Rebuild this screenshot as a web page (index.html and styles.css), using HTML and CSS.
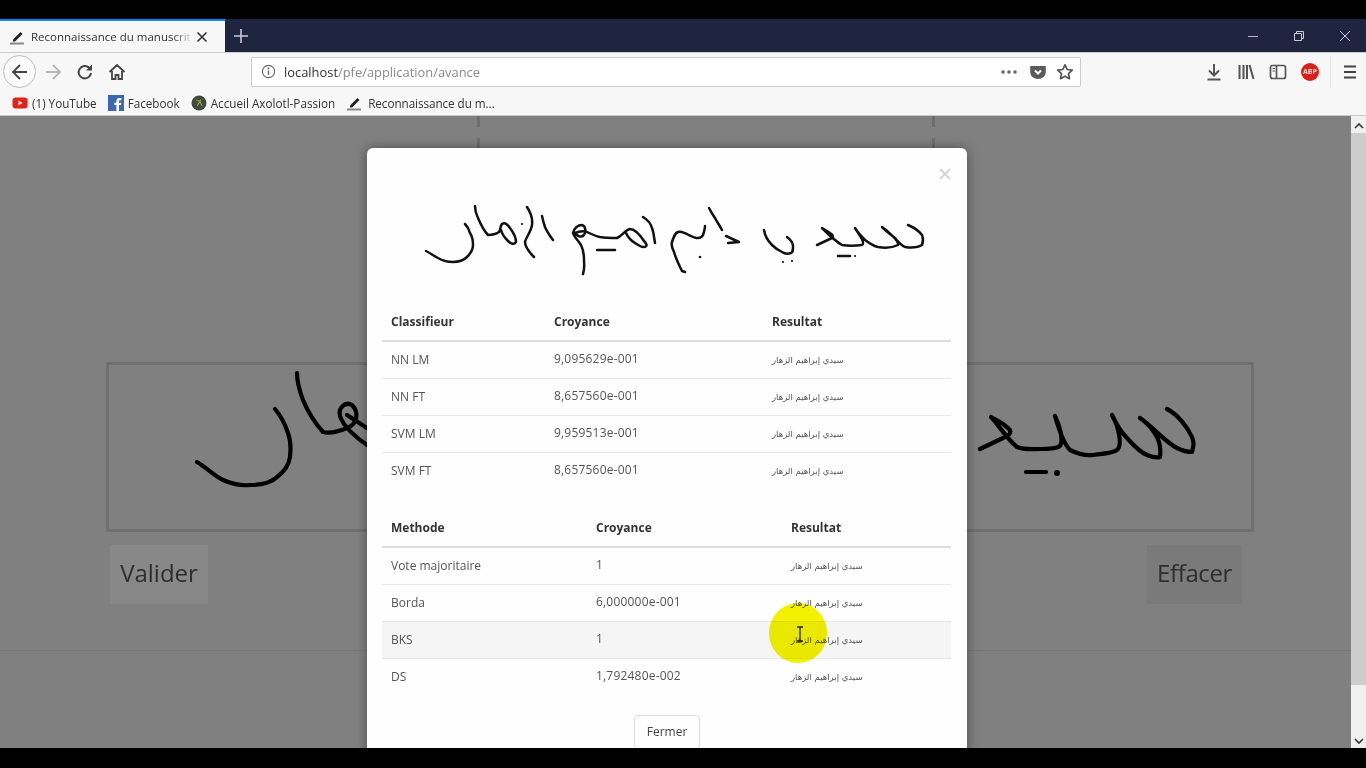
FILE: index.html
```html
<!DOCTYPE html>
<html lang="fr">
<head>
    <meta charset="UTF-8">
    <title>Reconnaissance du manuscrit</title>
    <link rel="stylesheet" href="styles.css">
</head>
<body>
    <div class="band"></div>

    <!-- Tabs -->
    <div class="tabbar">
        <div class="tab">
            <svg class="ico16" viewBox="0 0 16 16"><path d="M4 10.500 11.500 3l2 2L6 12.500H4z" fill="#222"/><path d="M1 14.500h14" stroke="#888" stroke-width="2"/></svg>
            <span class="tab-title">Reconnaissance du manuscrit a</span>
            <svg class="tab-close" viewBox="0 0 12 12"><path d="M1.500 1.500l9 9M10.500 1.500l-9 9" stroke="#333" stroke-width="1.600"/></svg>
        </div>
        <svg class="tab-new" viewBox="0 0 14 14"><path d="M7 0v14M0 7h14" stroke="#c4c8d8" stroke-width="1.600"/></svg>
        <div class="win-btns">
            <svg viewBox="0 0 12 12"><path d="M1 6.500h10" stroke="#b5b9c8" stroke-width="1"/></svg>
            <svg viewBox="0 0 12 12"><path d="M1.500 3.500h7v7h-7zM3.500 3.500v-2h7v7h-2" fill="none" stroke="#c8ccd8" stroke-width="1"/></svg>
            <svg viewBox="0 0 12 12"><path d="M1 1l10 10M11 1L1 11" stroke="#c8ccd8" stroke-width="1"/></svg>
        </div>
    </div>

    <!-- Toolbar -->
    <div class="toolbar">
        <div class="nav-btn back">
            <svg class="ico18" viewBox="0 0 18 18"><path d="M16 9H2M9 2 2 9l7 7" fill="none" stroke="#444" stroke-width="1.800"/></svg>
        </div>
        <svg class="ico18 forward" viewBox="0 0 18 18"><path d="M2 9h14M9 2l7 7-7 7" fill="none" stroke="#b5b5b5" stroke-width="1.800"/></svg>
        <svg class="ico18 reload" viewBox="0 0 18 18"><path d="M15 10a6.200 6.200 0 1 1-1.800-5.200L15 6.500" fill="none" stroke="#444" stroke-width="2"/><path d="M16 1.500v6h-6z" fill="#444"/></svg>
        <svg class="ico18 home" viewBox="0 0 18 18"><path d="M1.500 9 9 2l7.500 7M4 8v8h3.500v-4h3v4H14V8" fill="none" stroke="#444" stroke-width="1.800"/></svg>
        <div class="urlbar">
            <svg class="info" viewBox="0 0 16 16"><circle cx="8" cy="8" r="6.500" fill="none" stroke="#666" stroke-width="1.200"/><path d="M8 7v4.500" stroke="#666" stroke-width="1.500"/><circle cx="8" cy="4.800" r="1" fill="#666"/></svg>
            <span class="url"><span class="host">localhost</span>/pfe/application/avance</span>
            <svg class="dots" viewBox="0 0 16 4"><circle cx="2" cy="2" r="1.800" fill="#666"/><circle cx="8" cy="2" r="1.800" fill="#666"/><circle cx="14" cy="2" r="1.800" fill="#666"/></svg>
            <svg class="pocket" viewBox="0 0 16 16"><path d="M1 2h14a.800.800 0 0 1 .800.800V8a7.800 7 0 0 1-15.600 0V2.800A.800.800 0 0 1 1 2z" fill="#5a5a5a"/><path d="M5 6.500l3 3 3-3" fill="none" stroke="#fff" stroke-width="2"/></svg>
            <svg class="star" viewBox="0 0 18 18"><path d="M9 1.800l2.200 4.700 5.100.6-3.800 3.500 1 5.100L9 13.200l-4.500 2.500 1-5.100L1.700 7.100l5.100-.6z" fill="none" stroke="#555" stroke-width="1.700" stroke-linejoin="round"/></svg>
        </div>
        <div class="tools">
            <svg class="ico18" viewBox="0 0 18 18"><path d="M9 1v11M4 7.500 9 12.500l5-5M2.500 16.500h13" fill="none" stroke="#555" stroke-width="2"/></svg>
            <svg class="ico18" viewBox="0 0 18 18"><path d="M2.500 2v14M6.500 2v14M10 2v14M12.500 2l4 14" fill="none" stroke="#555" stroke-width="2"/></svg>
            <svg class="ico18" viewBox="0 0 18 18"><rect x="1.500" y="2.500" width="15" height="13" rx="2" fill="none" stroke="#555" stroke-width="1.700"/><path d="M7.500 2.500v13" stroke="#555" stroke-width="1.700"/><path d="M3.500 5.500h2.500M3.500 8h2.500" stroke="#555" stroke-width="1"/></svg>
            <span class="abp">ABP</span>
            <span class="sep"></span>
            <svg class="ico18" viewBox="0 0 18 18"><path d="M3 3.500h12M3 9h12M3 14.500h12" stroke="#444" stroke-width="2"/></svg>
        </div>
    </div>

    <!-- Bookmarks -->
    <div class="bookmarks">
        <span class="bm">
            <svg class="ico16" viewBox="0 0 16 16"><rect x="0.500" y="2.500" width="15" height="11" rx="3" fill="#e62117"/><path d="M6.500 5.500v5l4-2.500z" fill="#fff"/></svg>
            (1) YouTube
        </span>
        <span class="bm">
            <svg class="ico16" viewBox="0 0 16 16"><rect width="16" height="16" fill="#3b68b5"/><path d="M11 16v-6h2l.300-2.300H11V6.300c0-.7.200-1.100 1.100-1.100h1.300V3.100c-.3 0-1-.1-1.900-.1-1.900 0-3.100 1.100-3.100 3.200v1.500H6.300V10h2.100v6z" fill="#fff"/></svg>
            Facebook
        </span>
        <span class="bm">
            <svg class="ico16" viewBox="0 0 16 16"><circle cx="8" cy="8" r="7.500" fill="#3f4a3a"/><path d="M5 5c3 0 5 2 6 6M10 4.500 6 11" fill="none" stroke="#a8a050" stroke-width="1.200"/></svg>
            Accueil Axolotl-Passion
        </span>
        <span class="bm last">
            <svg class="ico16" viewBox="0 0 16 16"><path d="M4 10.500 11.500 3l2 2L6 12.500H4z" fill="#222"/><path d="M1 14.500h14" stroke="#888" stroke-width="2"/></svg>
            Reconnaissance du m...
        </span>
    </div>

    <!-- Page behind the modal -->
    <div class="viewport">
        <div class="page">
            <div class="top-canvas"></div>
            <div class="canvas">
                <!-- viewBox is in screen pixels, so the ink can be read off the screenshot -->
                <svg class="canvas-ink" viewBox="109 365 1142 164">
                    <path d="M197 462C206 467 214 476 223 480 232 484 241 486 250 485 261 485 271 483 277 477 285 471 289 465 290 457 291 448 291 441 288 433 285 424 281 416 275 409" class="ink-stroke"/>
                    <path d="M297 373C297 383 300 392 303 400 308 412 315 423 323 432 331 434 340 431 347 428 358 424 359 412 352 405 345 401 338 408 340 416 343 426 356 438 370 447" class="ink-stroke"/>
                    <path d="M347 415 370 430" class="ink-stroke"/>
                    <path d="M980 449 1003 438C1011 435 1012 431 1008 428 1003 423 996 420 991 417 998 424 1006 438 1017 447 1024 450 1032 449 1040 449 1047 449 1056 449 1060 446 1064 440 1059 424 1055 416 1059 430 1064 444 1070 450 1078 454 1085 456 1093 455 1103 454 1113 453 1117 450 1123 445 1118 425 1112 415 1118 428 1122 433 1127 438 1134 446 1140 452 1147 455 1152 457 1157 458 1160 457 1161 449 1160 443 1157 437 1152 428 1146 422 1140 418 1152 426 1165 442 1177 448 1183 451 1188 452 1192 452 1194 445 1194 442 1192 437 1187 426 1177 414 1167 409" class="ink-stroke"/>
                    <path d="M1026 472h20" class="ink-stroke"/>
                    <circle cx="1057" cy="473" r="3" fill="#000"/>
                </svg>
            </div>
            <div class="page-btns">
                <span class="page-btn valider">Valider</span>
                <span class="page-btn effacer">Effacer</span>
            </div>
            <div class="page-rule"></div>
        </div>
        <div class="scrollbar">
            <svg class="arrow" viewBox="0 0 10 6"><path d="M1 5l4-4 4 4" fill="none" stroke="#333" stroke-width="1.600"/></svg>
            <div class="thumb"></div>
            <svg class="arrow" viewBox="0 0 10 6"><path d="M1 1l4 4 4-4" fill="none" stroke="#333" stroke-width="1.600"/></svg>
        </div>

        <!-- Modal -->
        <div class="modal">
            <svg class="modal-close" viewBox="0 0 12 12"><path d="M1 1l10 10M11 1 1 11" stroke="#d4d4d4" stroke-width="1.800"/></svg>
            <svg class="sentence" viewBox="410 195 530 90">
                <path d="M426 251C430 253 434 256 438 258 443 261 448 262 453 262 459 262 464 260 467 257 471 253 473 249 473 245 473 240 472 236 470 233 469 229 467 226 465 224" class="ink-thin"/>
                <path d="M475 206C475 210 476 214 478 218 481 225 484 231 488 235 492 235 496 234 499 232 501 229 500 226 502 224 505 222 508 225 510 228 513 232 516 238 516 242 514 245 511 244 508 241 505 238 502 234 501 230" class="ink-thin"/>
                <path d="M527 207C531 213 533 218 532 225 531 232 526 237 525 242 525 248 530 253 534 257" class="ink-thin"/>
                <circle cx="522" cy="224" r="1.100" fill="#111"/>
                <path d="M542 216C543 221 544 224 545 227 547 232 550 236 553 240" class="ink-thin"/>
                <path d="M583 274C585 268 584 264 584 260 584 254 583 249 581 245 578 240 574 237 573 233 574 228 578 225 582 225 586 226 586 232 584 235 581 238 577 236 575 233 580 231 584 231 587 232 591 234 595 236 600 237 606 238 612 238 617 238 622 236 625 230 630 229 635 229 640 235 644 241 650 247 644 248 640 246 634 243 628 238 626 233" class="ink-thin"/>
                <path d="M643 217C648 220 651 224 652 228 654 233 654 238 655 243" class="ink-thin"/>
                <path d="M597 250h18" class="ink-thin"/>
                <path d="M685 272 682 271C679 265 676 259 674 252 672 248 671 245 672 242 674 236 675 233 678 232 681 231 684 233 687 234 691 236 694 238 698 238 701 238 702 237 703 235 704 232 705 229 705 226" class="ink-thin"/>
                <circle cx="700" cy="257" r="1.300" fill="#111"/>
                <path d="M709 208C711 212 713 215 715 218 717 222 720 226 722 230" class="ink-thin"/>
                <path d="M726 236 739 242 728 243" class="ink-thin"/>
                <path d="M787 237C791 240 793 243 793 246 793 250 793 252 791 253 788 254 785 254 782 252 778 250 775 248 772 245 768 241 765 236 764 230" class="ink-thin"/>
                <circle cx="783" cy="262" r="1.100" fill="#111"/>
                <circle cx="792" cy="261" r="1.100" fill="#111"/>
                <path d="M817 245 832 238C834 236 832 234 830 233 827 231 824 229 822 228 828 234 835 241 842 245 848 246 855 246 862 245 866 243 858 233 855 228 858 233 862 237 865 240 869 243 873 246 878 247 884 248 892 248 898 245 899 241 888 231 882 227 886 231 890 234 895 238 898 242 901 245 905 247 911 248 917 248 922 245 924 240 923 238 922 235 919 231 913 227 908 225" class="ink-thin"/>
                <path d="M838 256h12" class="ink-thin"/>
                <circle cx="855" cy="256" r="1.100" fill="#111"/>
            </svg>

            <table class="res-table first">
                <thead><tr><th>Classifieur</th><th>Croyance</th><th>Resultat</th></tr></thead>
                <tbody>
                    <tr><td>NN LM</td><td class="num">9,095629e-001</td><td class="ar" dir="rtl">سيدي إبراهيم الزهار</td></tr>
                    <tr><td>NN FT</td><td class="num">8,657560e-001</td><td class="ar" dir="rtl">سيدي إبراهيم الزهار</td></tr>
                    <tr><td>SVM LM</td><td class="num">9,959513e-001</td><td class="ar" dir="rtl">سيدي إبراهيم الزهار</td></tr>
                    <tr><td>SVM FT</td><td class="num">8,657560e-001</td><td class="ar" dir="rtl">سيدي إبراهيم الزهار</td></tr>
                </tbody>
            </table>

            <table class="res-table second">
                <thead><tr><th>Methode</th><th>Croyance</th><th>Resultat</th></tr></thead>
                <tbody>
                    <tr><td>Vote majoritaire</td><td class="num">1</td><td class="ar" dir="rtl">سيدي إبراهيم الزهار</td></tr>
                    <tr><td>Borda</td><td class="num">6,000000e-001</td><td class="ar" dir="rtl">سيدي إبراهيم الزهار</td></tr>
                    <tr class="hover"><td>BKS</td><td class="num">1</td><td class="ar" dir="rtl">سيدي إبراهيم الزهار</td></tr>
                    <tr><td>DS</td><td class="num">1,792480e-002</td><td class="ar" dir="rtl">سيدي إبراهيم الزهار</td></tr>
                </tbody>
            </table>

            <div class="modal-foot"><span class="close-btn">Fermer</span></div>
            <div class="cursor-dot"></div>
            <svg class="ibeam" viewBox="0 0 8 16"><path d="M1 1h6M1 15h6M4 1v14" stroke="#222" stroke-width="1.300" fill="none"/></svg>
        </div>
    </div>

    <div class="band bottom"></div>
</body>
</html>
```

FILE: styles.css
```css
* {
    box-sizing: border-box;
}

html, body {
    margin: 0;
    height: 768px;
    overflow: hidden;
}

body {
    display: flex;
    flex-direction: column;
    background-color: #000;
    font-family: 'Open Sans', 'Liberation Sans', sans-serif;
    color: #444;
}

svg {
    display: block;
    flex: none;
}

.band {
    height: 19px;
    background-color: #000;
}

.band.bottom {
    height: 20px;
}

/* browser chrome */
.tabbar {
    height: 33px;
    display: flex;
    align-items: center;
    background-color: #20253f;
}

.tab {
    width: 225px;
    height: 33px;
    display: flex;
    align-items: center;
    padding: 0 12px 0 9px;
    background-color: #f7f7f7;
    border-top: 2px solid #0a84ff;
}

.tab-title {
    width: 162px;
    margin-left: 6px;
    font-size: 11.500px;
    color: #333;
    white-space: nowrap;
    overflow: hidden;
    -webkit-mask-image: linear-gradient(to right, #000 88%, transparent);
    mask-image: linear-gradient(to right, #000 88%, transparent);
}

.tab-close {
    width: 12px;
    height: 12px;
    margin-left: 3px;
}

.tab-new {
    width: 14px;
    height: 14px;
    margin-left: 9px;
}

.win-btns {
    margin-left: auto;
    margin-right: 15px;
    display: flex;
    gap: 34px;
}

.win-btns svg {
    width: 12px;
    height: 12px;
}

.toolbar {
    height: 36px;
    display: flex;
    align-items: center;
    padding: 2px 0 0 3px;
    background-color: #f7f7f7;
    border-top: 1px solid #ccc;
}

.ico18 {
    width: 18px;
    height: 18px;
}

.ico16 {
    width: 16px;
    height: 16px;
}

.nav-btn {
    width: 33px;
    height: 33px;
    display: flex;
    align-items: center;
    justify-content: center;
    border: 1px solid #bbb;
    border-radius: 50%;
    background-color: #fbfbfb;
}

.forward {
    margin-left: 8px;
}

.reload {
    margin-left: 14px;
}

.home {
    margin-left: 14px;
}

.urlbar {
    width: 830px;
    height: 30px;
    margin-left: 125px;
    display: flex;
    align-items: center;
    padding: 0 6px 0 9px;
    background-color: #fff;
    border: 1px solid #ccc;
    border-radius: 2px;
}

.info {
    width: 15px;
    height: 15px;
}

.url {
    margin-left: 8px;
    font-size: 12.900px;
    color: #8a8a8a;
}

.host {
    color: #333;
}

.dots {
    width: 16px;
    height: 4px;
    margin-left: auto;
}

.pocket {
    width: 16px;
    height: 16px;
    margin-left: 13px;
}

.star {
    width: 18px;
    height: 18px;
    margin-left: 10px;
}

.tools {
    display: flex;
    align-items: center;
    margin-left: 124px;
    gap: 14px;
}

.abp {
    width: 18px;
    height: 18px;
    display: flex;
    align-items: center;
    justify-content: center;
    border-radius: 50%;
    background-color: #d9201c;
    color: #f6d9d0;
    font-size: 7px;
    font-weight: 700;
}

.sep {
    width: 1px;
    height: 32px;
    margin: 0 -4px 0 -3px;
    background-color: #e2e2e2;
}

.bookmarks {
    height: 28px;
    display: flex;
    align-items: center;
    gap: 11px;
    padding: 2px 0 0 12px;
    background-color: #f7f7f7;
    border-bottom: 1px solid #c8c8c8;
}

.bm {
    display: flex;
    align-items: center;
    gap: 4px;
    font-size: 11.700px;
    color: #333;
}

.bm.last {
    gap: 6px;
    letter-spacing: -0.050px;
}

/* page */
.viewport {
    position: relative;
    height: 632px;
    display: flex;
    overflow: hidden;
}

.page {
    flex: 1;
    background-color: #808080;
    overflow: hidden;
}

.top-canvas {
    width: 458px;
    height: 32px;
    margin-left: 477px;
    background-image:
        linear-gradient(#6e6e6e 11px, transparent 11px, transparent 22px, #6e6e6e 22px),
        linear-gradient(#6e6e6e 11px, transparent 11px, transparent 22px, #6e6e6e 22px);
    background-position: left top, right top;
    background-size: 3px 100%;
    background-repeat: no-repeat;
}

.canvas {
    width: 1148px;
    height: 170px;
    margin: 214px 0 0 106px;
    border: 3px solid #707070;
}

.canvas-ink {
    width: 1142px;
    height: 164px;
}

.ink-stroke {
    fill: none;
    stroke: #000;
    stroke-width: 4.200;
    stroke-linecap: round;
    stroke-linejoin: round;
}

.page-btns {
    width: 1132px;
    margin: 13px 0 0 110px;
    display: flex;
    justify-content: space-between;
}

.page-btn {
    height: 59px;
    padding-bottom: 4px;
    display: flex;
    align-items: center;
    justify-content: center;
    color: #2e2e2e;
    font-size: 24px;
}

.valider {
    width: 98px;
    background-color: #888;
}

.effacer {
    width: 95px;
    background-color: #7a7a7a;
    letter-spacing: -0.400px;
}

.page-rule {
    height: 1px;
    margin-top: 46px;
    background-color: #777;
}

.scrollbar {
    width: 15px;
    display: flex;
    flex-direction: column;
    align-items: center;
    background-color: #f0f0f0;
}

.thumb {
    width: 100%;
    height: 552px;
    margin-bottom: auto;
    background-color: #cdcdcd;
}

.arrow {
    width: 10px;
    height: 6px;
    margin: 7px 0 4px;
}

/* modal sits over the dimmed page */
.modal {
    position: absolute;
    left: 367px;
    top: 32px;
    width: 600px;
    height: 640px;
    padding: 0 15px;
    background-color: #fefefe;
    border-radius: 6px 6px 0 0;
    box-shadow: 0 0 12px rgba(0, 0, 0, 0.4);
}

.modal-close {
    position: absolute;
    top: 20px;
    right: 16px;
    width: 12px;
    height: 12px;
}

.sentence {
    width: 530px;
    height: 90px;
    margin: 47px 0 0 28px;
}

.ink-thin {
    fill: none;
    stroke: #111;
    stroke-width: 2.500;
    stroke-linecap: round;
    stroke-linejoin: round;
}

.res-table {
    width: 569px;
    border-collapse: collapse;
    table-layout: fixed;
    font-size: 12px;
    color: #555;
}

.res-table.first {
    margin-top: 17px;
}

.res-table.second {
    margin-top: 19px;
}

.res-table th {
    height: 39px;
    padding: 0 9px;
    text-align: left;
    font-weight: 700;
    color: #333;
    border-bottom: 2px solid #ddd;
}

.res-table td {
    height: 37px;
    padding: 0 9px;
    border-bottom: 1px solid #e8e8e8;
}

.res-table tr:last-child td {
    border-bottom: 0;
}

.first th:nth-child(1) { width: 163px; }
.first th:nth-child(2) { width: 218px; }
.second th:nth-child(1) { width: 205px; }
.second th:nth-child(2) { width: 195px; }

.res-table td.num {
    padding-bottom: 3px;
    letter-spacing: 0.200px;
}

.res-table td.ar {
    text-align: left;
    font-family: 'DejaVu Sans', sans-serif;
    font-size: 8.500px;
    white-space: nowrap;
}

.hover td {
    background-color: #f5f5f5;
}

.modal-foot {
    margin-top: 20px;
    display: flex;
    justify-content: center;
}

.close-btn {
    width: 66px;
    height: 34px;
    padding-bottom: 1px;
    display: flex;
    align-items: center;
    justify-content: center;
    border: 1px solid #ddd;
    border-radius: 4px;
    font-size: 12px;
    color: #444;
}

.cursor-dot {
    position: absolute;
    left: 402px;
    top: 455px;
    width: 58px;
    height: 60px;
    border-radius: 50%;
    background-color: #f5f200;
    mix-blend-mode: multiply;
}

.ibeam {
    position: absolute;
    left: 429px;
    top: 478px;
    width: 8px;
    height: 16px;
}
```
